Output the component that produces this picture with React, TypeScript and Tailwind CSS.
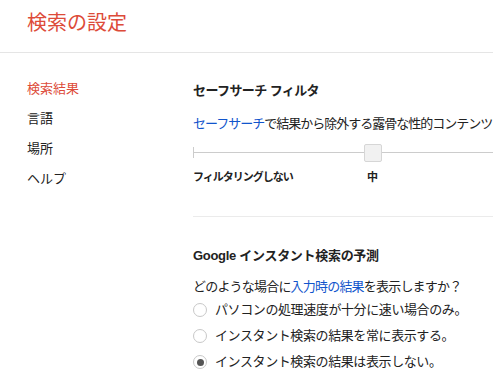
import React from "react";

const jp = '"Liberation Sans", "Noto Sans CJK JP", sans-serif';

const sideItems = ["検索結果", "言語", "場所", "ヘルプ"];

function Radio({ checked, label }: { checked?: boolean; label: string }) {
  return (
    <label className="flex h-[26px] items-center gap-[8px]">
      <span className="flex h-[14px] w-[14px] items-center justify-center rounded-full border border-[#c8c8c8] bg-white">
        {checked && <span className="h-[7px] w-[7px] rounded-full bg-[#555]" />}
      </span>
      <span className="tracking-[-0.4px]">{label}</span>
    </label>
  );
}

export default function App() {
  return (
    <div className="h-[385px] w-[493px] overflow-hidden bg-white text-[13px] text-[#222]" style={{ fontFamily: jp }}>
      <header className="flex h-[53px] items-center border-b border-[#e5e5e5] pl-[27px] pb-[6px]">
        <h1 className="text-[20px] font-normal leading-none text-[#dd4b39]">検索の設定</h1>
      </header>

      <div className="flex">
        <nav className="flex w-[193px] shrink-0 flex-col pl-[27px] pt-[27px]">
          {sideItems.map((s, i) => (
            <div key={s} className={`h-[30px] leading-[18px] ${i === 0 ? "text-[#dd4b39]" : "text-[#222]"}`}>
              {s}
            </div>
          ))}
        </nav>

        <main className="min-w-0 flex-1 pt-[29px]">
          <h2 className="whitespace-nowrap text-[13px] font-bold leading-[18px] tracking-[-0.6px]">セーフサーチ フィルタ</h2>
          <p className="mt-[15px] whitespace-nowrap leading-[18px] tracking-[-1px]">
            <span className="text-[#1155cc]">セーフサーチ</span>で結果から除外する露骨な性的コンテンツ
          </p>

          <div className="relative mt-[11px] h-[18px]">
            <div className="absolute left-0 right-0 top-[8px] h-px bg-[#cccccc]" />
            <div className="absolute left-0 top-[3px] h-[11px] w-px bg-[#cccccc]" />
            <div className="absolute left-[171px] top-0 h-[18px] w-[18px] rounded-[2px] border border-[#d6d6d6] bg-[#f1f1f1]" />
          </div>

          <div className="mt-[8px] flex whitespace-nowrap text-[11px] font-bold leading-[14px]">
            <span className="w-[174px] tracking-[-1px]">フィルタリングしない</span>
            <span>中</span>
          </div>

          <div className="mt-[32px] h-px bg-[#ebebeb]" />

          <h2 className="mt-[30px] whitespace-nowrap text-[13px] font-bold leading-[18px] tracking-[-0.3px]">Google インスタント検索の予測</h2>
          <p className="mt-[13px] whitespace-nowrap leading-[18px] tracking-[-0.8px]">
            どのような場合に<span className="text-[#1155cc]">入力時の結果</span>を表示しますか？
          </p>
          <div className="mt-[1px] flex flex-col whitespace-nowrap">
            <Radio label="パソコンの処理速度が十分に速い場合のみ。" />
            <Radio label="インスタント検索の結果を常に表示する。" />
            <Radio checked label="インスタント検索の結果は表示しない。" />
          </div>
        </main>
      </div>
    </div>
  );
}
